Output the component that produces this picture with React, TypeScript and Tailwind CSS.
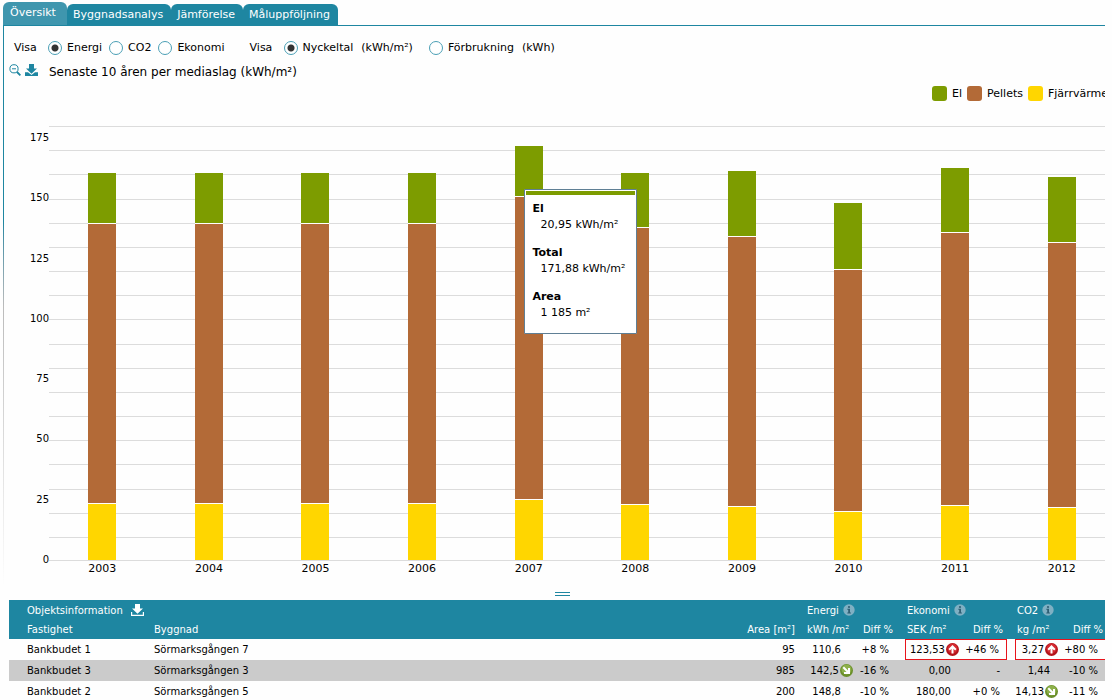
import { useState } from 'react'
import clsx from 'clsx'

const tabs = ['Översikt', 'Byggnadsanalys', 'Jämförelse', 'Måluppföljning']

const legend = [
  { label: 'El', color: 'bg-[#7d9c00]' },
  { label: 'Pellets', color: 'bg-[#b36a37]' },
  { label: 'Fjärrvärme', color: 'bg-[#ffd600]' },
]

// kWh/m² per year
const years = [
  { year: 2003, el: 20.74, pellets: 116.13, heat: 23.64 },
  { year: 2004, el: 20.74, pellets: 116.13, heat: 23.64 },
  { year: 2005, el: 20.74, pellets: 116.13, heat: 23.64 },
  { year: 2006, el: 20.74, pellets: 116.13, heat: 23.64 },
  { year: 2007, el: 20.9, pellets: 125.67, heat: 25.3 },
  { year: 2008, el: 22.4, pellets: 114.89, heat: 23.23 },
  { year: 2009, el: 26.96, pellets: 111.98, heat: 22.4 },
  { year: 2010, el: 27.37, pellets: 100.37, heat: 20.32 },
  { year: 2011, el: 26.54, pellets: 113.23, heat: 22.81 },
  { year: 2012, el: 26.96, pellets: 109.91, heat: 21.98 },
]

const AXIS_MAX = 180
const PLOT_HEIGHT = 434
const ticks = [175, 150, 125, 100, 75, 50, 25, 0]
const toPx = (value: number) => Math.round((value / AXIS_MAX) * PLOT_HEIGHT)

const tooltip = [
  { label: 'El', value: '20,95 kWh/m²' },
  { label: 'Total', value: '171,88 kWh/m²' },
  { label: 'Area', value: '1 185 m²' },
]

type Trend = 'up' | 'down'
type Metric = { value: string; diff: string; trend?: Trend; alert?: boolean }
type Building = { name: string; building: string; area: string; energy: Metric; economy: Metric; co2: Metric }

const buildings: Building[] = [
  {
    name: 'Bankbudet 1',
    building: 'Sörmarksgången 7',
    area: '95',
    energy: { value: '110,6', diff: '+8 %' },
    economy: { value: '123,53', diff: '+46 %', trend: 'up', alert: true },
    co2: { value: '3,27', diff: '+80 %', trend: 'up', alert: true },
  },
  {
    name: 'Bankbudet 3',
    building: 'Sörmarksgången 3',
    area: '985',
    energy: { value: '142,5', diff: '-16 %', trend: 'down' },
    economy: { value: '0,00', diff: '-' },
    co2: { value: '1,44', diff: '-10 %' },
  },
  {
    name: 'Bankbudet 2',
    building: 'Sörmarksgången 5',
    area: '200',
    energy: { value: '148,8', diff: '-10 %' },
    economy: { value: '180,00', diff: '+0 %' },
    co2: { value: '14,13', diff: '-11 %', trend: 'down' },
  },
]

function ZoomOutIcon() {
  return (
    <svg className="h-3 w-3" viewBox="0 0 12 12" fill="none" stroke="#1e86a1">
      <circle cx="5" cy="4.800" r="4.100" />
      <path d="M3 4.800h4" />
      <path d="M8 8l3.400 3.400" strokeWidth="1.800" />
    </svg>
  )
}

function DownloadIcon({ solid }: { solid?: boolean }) {
  return (
    <svg className="h-3 w-[13px]" viewBox="0 0 13 12" fill="currentColor">
      <path d="M4 0h5v4.500h3L6.500 9.800 1 4.500h3z" />
      {solid ? <path d="M0 8.300h3l3.500 2.700L10 8.300h3V12H0z" /> : <path d="M0 8h1.200v2.800h10.600V8H13v4H0z" />}
    </svg>
  )
}

function InfoIcon() {
  return (
    <svg className="h-3 w-3" viewBox="0 0 12 12">
      <circle cx="6" cy="6" r="5.700" fill="#7fb0c3" />
      <circle cx="6" cy="3" r="1.100" fill="#2f5f74" />
      <path d="M4.300 4.700H7v3.700h.9v1H4.300v-1h.9V5.700h-.9z" fill="#2f5f74" />
    </svg>
  )
}

function TrendIcon({ trend }: { trend: Trend }) {
  const up = trend === 'up'
  return (
    <svg className="h-[13px] w-[13px] shrink-0" viewBox="0 0 13 13">
      <circle cx="6.5" cy="6.5" r="6.500" fill={up ? '#b3141a' : '#6b8f2a'} />
      <circle cx="6.5" cy="5.500" r="5" fill={up ? '#d42a30' : '#8db04a'} />
      {up ? (
        <path d="M6.500 10.500V4M3.200 6.700l3.300-3.300 3.300 3.300" fill="none" stroke="#fff" strokeWidth="2" />
      ) : (
        <path d="M3.300 3.300l5.200 5.200M9 4v5H4" fill="none" stroke="#fff" strokeWidth="2" />
      )}
    </svg>
  )
}

type RadioProps = { name: string; label: string; unit?: string; checked: boolean; onChange: () => void }

function Radio({ name, label, unit, checked, onChange }: RadioProps) {
  return (
    <label className="flex items-center gap-[5px]">
      <input
        type="radio"
        name={name}
        checked={checked}
        onChange={onChange}
        className="h-[14px] w-[14px] appearance-none rounded-full border border-[#4a9fb5] bg-white checked:bg-[radial-gradient(circle,#333_0_3px,#fff_4px)]"
      />
      <span>{label}</span>
      {unit && <span className="ml-[3px]">{unit}</span>}
    </label>
  )
}

function Tooltip() {
  return (
    <div className="absolute top-[63px] left-[49px] z-10 w-[113px] rounded-[1px] border border-[#5f7f95] bg-white px-px pt-px pb-3 text-[11px] leading-4 whitespace-nowrap">
      <div className="mb-[6px] h-1 bg-[#7d9c00]" />
      <dl className="flex flex-col gap-3 pl-[6px]">
        {tooltip.map((row) => (
          <div key={row.label}>
            <dt className="font-bold">{row.label}</dt>
            <dd className="pl-2">{row.value}</dd>
          </div>
        ))}
      </dl>
    </div>
  )
}

function Chart() {
  return (
    <div className="flex overflow-hidden pt-[25px]">
      <div className="relative w-[46px] shrink-0 text-right text-[10px]">
        {ticks.map((tick) => (
          <span key={tick} className="absolute right-0 -translate-y-1/2 leading-3" style={{ top: PLOT_HEIGHT - toPx(tick) }}>
            {tick}
          </span>
        ))}
      </div>
      <div className="-mr-[10px] grow">
        <div className="relative">
          <div className="absolute inset-0 flex flex-col">
            {Array.from({ length: AXIS_MAX / 10 }, (_, i) => (
              <div key={i} className="flex-1 border-t border-[#dcdcdc]" />
            ))}
          </div>
          <div className="relative grid grid-cols-10 border-b border-[#dcdcdc]">
            {years.map((d) => (
              <div key={d.year} className="relative flex flex-col items-center justify-end" style={{ height: PLOT_HEIGHT }}>
                <div className="w-7 bg-[#7d9c00]" style={{ height: toPx(d.el) }} />
                <div className="w-7 border-t border-white bg-[#b36a37]" style={{ height: toPx(d.pellets) }} />
                <div className="w-7 border-t border-white bg-[#ffd600]" style={{ height: toPx(d.heat) }} />
                {d.year === 2007 && <Tooltip />}
              </div>
            ))}
          </div>
        </div>
        <div className="grid grid-cols-10 text-center text-[11px] leading-4">
          {years.map((d) => (
            <span key={d.year}>{d.year}</span>
          ))}
        </div>
      </div>
    </div>
  )
}

function MetricCells({ metric, last }: { metric: Metric; last?: boolean }) {
  return (
    <>
      <td className={clsx('p-0', metric.alert && 'border-y border-l border-[#e8141c]')}>
        <div className={clsx('flex items-center justify-end gap-px', metric.trend ? 'pr-[2px]' : 'pr-[10px]')}>
          {metric.value}
          {metric.trend && <TrendIcon trend={metric.trend} />}
        </div>
      </td>
      <td className={clsx('p-0 pr-[7px] text-right', metric.alert && 'border-y border-[#e8141c]', metric.alert && !last && 'border-r')}>
        {metric.diff}
      </td>
    </>
  )
}

function BuildingTable() {
  return (
    <table className="w-full table-fixed border-separate border-spacing-0 text-[10px] whitespace-nowrap">
      <colgroup>
        <col className="w-[145px]" />
        <col />
        <col className="w-[90px]" />
        <col className="w-[60px]" />
        <col className="w-[50px]" />
        <col className="w-[56px]" />
        <col className="w-[46px]" />
        <col className="w-2" />
        <col className="w-[45px]" />
        <col className="w-[45px]" />
      </colgroup>
      <thead className="bg-[#1e86a1] text-left text-white [&_th]:p-0 [&_th]:font-normal">
        <tr className="h-5">
          <th colSpan={3}>
            <div className="flex items-center gap-2 pl-[18px]">
              Objektsinformation
              <button aria-label="Ladda ner">
                <DownloadIcon />
              </button>
            </div>
          </th>
          <th colSpan={2}>
            <div className="flex items-center gap-1 pl-3">Energi <InfoIcon /></div>
          </th>
          <th colSpan={3}>
            <div className="flex items-center gap-1 pl-[2px]">Ekonomi <InfoIcon /></div>
          </th>
          <th colSpan={2}>
            <div className="flex items-center gap-1 pl-[2px]">CO2 <InfoIcon /></div>
          </th>
        </tr>
        <tr className="h-[19px]">
          <th><div className="pl-[18px]">Fastighet</div></th>
          <th>Byggnad</th>
          <th><div className="text-right">Area [m²]</div></th>
          <th><div className="pl-3">kWh /m²</div></th>
          <th><div className="pr-3 text-right">Diff %</div></th>
          <th><div className="pl-[2px]">SEK /m²</div></th>
          <th><div className="pr-1 text-right">Diff %</div></th>
          <th />
          <th><div className="pl-[2px]">kg /m²</div></th>
          <th><div className="pr-[2px] text-right">Diff %</div></th>
        </tr>
      </thead>
      <tbody>
        {buildings.map((b) => (
          <tr key={b.name} className="h-[21px] even:bg-[#cbcbcb]">
            <td className="p-0 pl-[18px]">{b.name}</td>
            <td className="p-0">{b.building}</td>
            <td className="p-0 text-right">{b.area}</td>
            <td className="p-0">
              <div className={clsx('flex items-center justify-end gap-px', b.energy.trend ? 'pr-[2px]' : 'pr-[14px]')}>
                {b.energy.value}
                {b.energy.trend && <TrendIcon trend={b.energy.trend} />}
              </div>
            </td>
            <td className="p-0 pr-4 text-right">{b.energy.diff}</td>
            <MetricCells metric={b.economy} />
            <td className="p-0" />
            <MetricCells metric={b.co2} last />
          </tr>
        ))}
      </tbody>
    </table>
  )
}

export default function App() {
  const [tab, setTab] = useState(tabs[0])
  const [measure, setMeasure] = useState('Energi')
  const [mode, setMode] = useState('Nyckeltal')

  return (
    <div className="h-screen overflow-hidden bg-[#fefefe] pt-[2px] pr-[7px] pl-[3px] font-['DejaVu_Sans',Verdana,sans-serif] text-[11px] text-black">
      <nav className="flex items-end border-b border-[#1e86a1]">
        {tabs.map((t) => (
          <button
            key={t}
            onClick={() => setTab(t)}
            className={clsx(
              'rounded-t-md text-white',
              t === tab ? 'h-[23px] bg-[#3f96ae] pr-[11px] pl-[7px]' : 'h-[21px] bg-[#1e86a1] pt-[2px] pr-2 pl-[6px]',
            )}
          >
            {t}
          </button>
        ))}
      </nav>

      <main className="relative">
        {/* left edge fades out down the panel */}
        <div className="absolute top-0 left-0 h-[560px] w-px bg-linear-to-b from-[#1e86a1] from-35% via-[#bbb] via-50% to-transparent" />

        <div className="flex items-center pt-[14px] pl-[11px] leading-[15px]">
          <span className="w-[34px]">Visa</span>
          <div className="flex gap-[7px]">
            {['Energi', 'CO2', 'Ekonomi'].map((m) => (
              <Radio key={m} name="measure" label={m} checked={measure === m} onChange={() => setMeasure(m)} />
            ))}
          </div>
          <span className="ml-[25px] w-[34px]">Visa</span>
          <div className="flex gap-4">
            <Radio name="mode" label="Nyckeltal" unit="(kWh/m²)" checked={mode === 'Nyckeltal'} onChange={() => setMode('Nyckeltal')} />
            <Radio name="mode" label="Förbrukning" unit="(kWh)" checked={mode === 'Förbrukning'} onChange={() => setMode('Förbrukning')} />
          </div>
        </div>

        <div className="flex items-start pt-[9px] pl-[6px] leading-4 text-[#1e86a1]">
          <button aria-label="Zooma ut">
            <ZoomOutIcon />
          </button>
          <button aria-label="Ladda ner" className="ml-1">
            <DownloadIcon solid />
          </button>
          <h1 className="ml-[11px] text-[12px] text-black">Senaste 10 åren per mediaslag (kWh/m²)</h1>
        </div>

        <div className="overflow-hidden pt-[6px]">
          <ul className="-mr-[3px] flex justify-end gap-[5px]">
            {legend.map((l) => (
              <li key={l.label} className="flex items-center gap-[5px] leading-[15px]">
                <span className={clsx('h-[15px] w-[15px] rounded-[3px]', l.color)} />
                {l.label}
              </li>
            ))}
          </ul>
        </div>

        <Chart />

        <div className="pt-[15px] pb-1">
          <div className="ml-[552px] h-1 w-[15px] border-y border-[#1e86a1]" />
        </div>

        <div className="pl-[6px]">
          <BuildingTable />
        </div>
      </main>
    </div>
  )
}
